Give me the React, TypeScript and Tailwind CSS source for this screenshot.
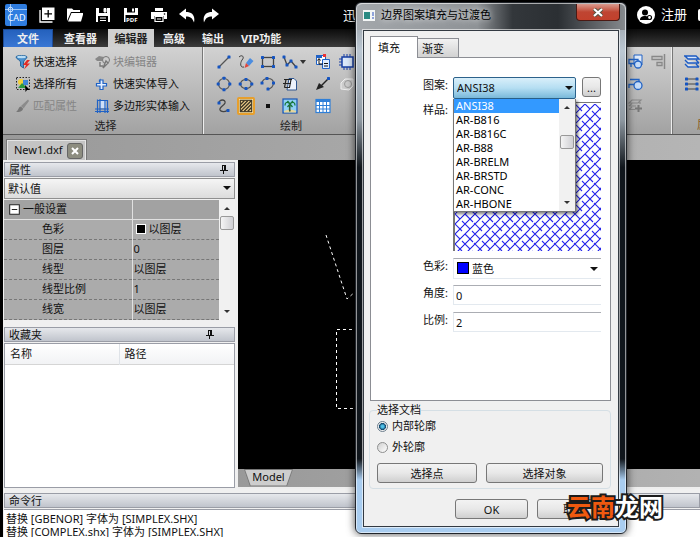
import React from 'react';

const PATTERNS = ['ANSI38', 'AR-B816', 'AR-B816C', 'AR-B88', 'AR-BRELM', 'AR-BRSTD', 'AR-CONC', 'AR-HBONE'];

const PROPERTIES = [
  { name: '色彩', value: '以图层', swatch: true },
  { name: '图层', value: '0' },
  { name: '线型', value: '以图层' },
  { name: '线型比例', value: '1' },
  { name: '线宽', value: '以图层' }
];

const MENU = ['高级', '输出', 'VIP功能'];

interface IconProps {
  children: React.ReactNode;
  className?: string;
}

function Icon({ children, className = 'size-4' }: IconProps) {
  return (
    <svg viewBox="0 0 16 16" fill="none" className={`shrink-0 ${className}`}>
      {children}
    </svg>
  );
}

function Dots({ at }: { at: number[][] }) {
  return (
    <>
      {at.map(([x, y]) => (
        <rect key={`${x}-${y}`} x={x - 1.5} y={y - 1.5} width="3" height="3" rx="0.6" fill="#1554c0" />
      ))}
    </>
  );
}

function Caret({ up = false }: { up?: boolean }) {
  return (
    <svg viewBox="0 0 8 4" className="w-2 h-1 shrink-0">
      <path d={up ? 'M0 4L4 0L8 4Z' : 'M0 0H8L4 4Z'} fill="#111" />
    </svg>
  );
}

// scroll arrows are smaller than the combo ones
function ScrollArrow({ up = false }: { up?: boolean }) {
  return (
    <svg viewBox="0 0 6 3" className="w-1.5 h-[3px] shrink-0">
      <path d={up ? 'M0 3L3 0L6 3Z' : 'M0 0H6L3 3Z'} fill="#333" />
    </svg>
  );
}

function Pin() {
  return (
    <svg viewBox="0 0 8 9" fill="none" className="w-2 h-[9px] shrink-0" shapeRendering="crispEdges">
      <path d="M2 .5H6M2.500 0V5M5.500 0V5M4.500 0V5M0 5.500H8M3.500 6V9" stroke="#111" />
    </svg>
  );
}

/* ---- Quick access bar ---- */

function QuickBar() {
  return (
    <header className="h-[29px] shrink-0 bg-black flex items-center pl-[5px] text-white">
      <svg viewBox="0 0 22 22" className="size-[22px]">
        <rect width="22" height="22" rx="2" fill="#2f7de0" />
        <path d="M0 5.5H22M5.500 0V22" stroke="#b7d8ff" strokeWidth="0.800" />
        <circle cx="5.500" cy="5.500" r="2.300" fill="none" stroke="#d9ebff" strokeWidth="0.900" />
        <text x="11.500" y="17" textAnchor="middle" fontSize="9" fill="#fff" fontFamily="Open Sans, sans-serif">CAD</text>
      </svg>
      <div className="flex items-center gap-3 pl-3">
        <button aria-label="新建">
          <Icon>
            <path d="M3 .5H15.500V13H3Z" fill="#fff" />
            <path d="M1 3V15H13.500" stroke="#fff" strokeWidth="1.300" />
            <path d="M9.200 3V10.600M5.400 6.800H13" stroke="#000" strokeWidth="1.300" />
          </Icon>
        </button>
        <button aria-label="打开">
          <Icon>
            <path d="M0 14V1.500H5L6.500 3H13V5H4L0.500 13Z" fill="#fff" />
            <path d="M4.500 6H16.500L14 14.500H1Z" fill="#fff" />
          </Icon>
        </button>
        <button aria-label="保存">
          <Icon>
            <path d="M1 1H15V15H1Z" fill="#fff" />
            <path d="M4 1H12V6H4ZM3 9H13V15H3Z" fill="#000" />
            <path d="M9 1.500H11V5H9ZM5 11H11M5 13.500H11" fill="#fff" stroke="#fff" />
          </Icon>
        </button>
        <button aria-label="另存为 PDF">
          <Icon>
            <path d="M1 1H15V8H1ZM1 8H2.500V15H1Z" fill="#fff" />
            <path d="M4 1H12V5.500H4ZM3 8H13V8.500H3Z" fill="#000" />
            <path d="M9 1.500H11V4.500H9Z" fill="#fff" />
            <text x="3" y="15" fontSize="6" fontWeight="bold" fill="#fff" fontFamily="Open Sans, sans-serif">PDF</text>
          </Icon>
        </button>
        <button aria-label="打印">
          <Icon>
            <path d="M4 1H12V4H4ZM0 5H16V12H13V9H3V12H0Z" fill="#fff" />
            <path d="M4 9.500H12V14.500H4ZM6 12H10" stroke="#fff" strokeWidth="1.200" />
            <circle cx="13.500" cy="7" r=".8" fill="#000" />
          </Icon>
        </button>
        <button aria-label="撤销">
          <Icon>
            <path d="M0 7L7 1.500V5C13 5 16.500 8.500 15 15.500C13.500 11 11 9.500 7 9.500V12.500Z" fill="#fff" />
          </Icon>
        </button>
        <button aria-label="重做" className="-ml-1">
          <Icon>
            <path d="M16 7L9 1.500V5C3 5 -.5 8.500 1 15.500C2.500 11 5 9.500 9 9.500V12.500Z" fill="#fff" />
          </Icon>
        </button>
      </div>
      <span className="pl-[124px] pt-[3px] text-[13px]">迅</span>
      <div className="ml-auto flex items-center overflow-hidden">
        <svg viewBox="0 0 18 18" className="size-[18px]">
          <circle cx="9" cy="9" r="9" fill="#fff" />
          <circle cx="8" cy="6.500" r="3" fill="#000" />
          <path d="M3 14C3 11 5 10 8 10C10 10 11 10.500 11.500 14Z" fill="#000" />
          <circle cx="12.500" cy="11.500" r="2" fill="#fff" stroke="#000" strokeWidth="1.200" />
        </svg>
        <a href="#register" className="pl-1.5 text-[13px]">注册</a>
        <span className="ml-[11px] w-[2px] h-[12px] rounded-l-full bg-white" />
      </div>
    </header>
  );
}

function MenuBar() {
  return (
    <nav className="h-[18px] shrink-0 ml-[3px] bg-linear-to-b from-[#0c0c0c] to-[#3c3c3c] flex items-stretch text-[11px] font-bold text-[#eee] leading-none">
      <button className="w-[50px] bg-linear-to-b from-[#2461bd] to-[#3a77d4] border border-[#1d4c99] border-b-0">文件</button>
      <button className="w-[55px]">查看器</button>
      <button className="w-[46px] bg-[#d0d0d0] text-[#222]">编辑器</button>
      <div className="flex gap-[17px] pl-[9px]">
        {MENU.map((item) => (
          <button key={item}>{item}</button>
        ))}
      </div>
    </nav>
  );
}

/* ---- Ribbon ---- */

interface ToolProps {
  label: string;
  disabled?: boolean;
  children: React.ReactNode;
}

function Tool({ label, disabled, children }: ToolProps) {
  return (
    <button disabled={disabled} className="flex items-center gap-[2px] text-[#111] disabled:text-[#858585]">
      {children}
      <span className="whitespace-nowrap leading-4">{label}</span>
    </button>
  );
}

function SelectGroup() {
  return (
    <section className="w-[200px] shrink-0 border-r border-[#777] flex flex-col pt-[7px]">
      <div className="flex gap-[18px] pl-[12px]">
        <div className="flex flex-col gap-[6px]">
          <Tool label="快速选择">
            <Icon>
              <path d="M1 3C1 1 12 1 12 3C12 5 8.500 6 8.500 8V14L5.500 12V8C5.500 6 1 5 1 3Z" fill="#4a91cf" stroke="#26659d" />
              <ellipse cx="6.500" cy="3" rx="4.500" ry="1.200" fill="#b9dcf3" />
              <path d="M12 6L8 11H11L9 15.500L15 9.500H12L15 6Z" fill="#e32b25" />
            </Icon>
          </Tool>
          <Tool label="选择所有">
            <Icon>
              <rect x="1.500" y="1.500" width="13" height="12" stroke="#222" strokeDasharray="1.500 1.500" />
              <circle cx="6" cy="6" r="3" fill="#f4d13a" />
              <rect x="8" y="4" width="5" height="5" fill="#3e87d8" />
              <path d="M3 12L7 7L12 12Z" fill="#2b9b3e" />
              <path d="M10 9L15 14L12 14L10.500 16Z" fill="#000" />
            </Icon>
          </Tool>
          <Tool label="匹配属性" disabled>
            <Icon>
              <path d="M13 1.500L6 8L8.500 10.500L14 3Z" fill="#8b8b8b" />
              <path d="M6 8.500C3 9 4 12 1 14C5 14.500 8 13 8 10.500Z" fill="#777" />
            </Icon>
          </Tool>
        </div>
        <div className="flex flex-col gap-[6px]">
          <Tool label="块编辑器" disabled>
            <Icon>
              <path d="M0 5L4 2L9 3L7 7L2 7Z" fill="#888" />
              <circle cx="11" cy="6" r="3.500" fill="#ccc" stroke="#777" />
              <path d="M8 14L11 7L13 9ZM5 8V12H8" stroke="#777" strokeWidth="1.400" fill="#ddd" />
            </Icon>
          </Tool>
          <Tool label="快速实体导入">
            <Icon>
              <path d="M4.500 4.500V4H8V7.500H11.500V10H8V13.500H5V10H1.500V7.500H5V4Z" fill="#e5f0ff" stroke="#1f62c6" strokeWidth="1.200" />
            </Icon>
          </Tool>
          <Tool label="多边形实体输入">
            <Icon>
              <path d="M5 3H11V10H5Z" fill="#cfe0f8" />
              <path d="M2.500 1.500V15M5 1V15M-.5 11H14M-.5 13.500H14M3 2.500H12.500V15M10 3V15" stroke="#1f62c6" strokeWidth="1.200" />
            </Icon>
          </Tool>
        </div>
      </div>
      <h2 className="text-center leading-4 pl-[6px] pt-1 text-[#222]">选择</h2>
    </section>
  );
}

function DrawGroup() {
  return (
    <section className="w-[172px] shrink-0 border-l border-[#eee] flex flex-col pt-[7px]">
      <div className="grid grid-cols-[22px_22px_22px_33px_24px_16px] gap-y-[6px] pl-[12px]">
        <button aria-label="直线"><Icon><path d="M3 13L13 3" stroke="#555" strokeWidth="1.300" /><Dots at={[[3, 13], [13, 3]]} /></Icon></button>
        <button aria-label="手绘">
          <Icon>
            <path d="M1 3C4 0 7 3 4 6C2 9 2 14 6 13" stroke="#444" />
            <path d="M12 4L15.500 7L11 12L8 9Z" fill="#4b8de0" />
            <path d="M8 9L11 12L6.500 14Z" fill="#e0443b" />
          </Icon>
        </button>
        <button aria-label="矩形"><Icon><rect x="2.500" y="3.500" width="11" height="9" stroke="#444" strokeWidth="1.300" /><Dots at={[[2.5, 3.5], [13.5, 3.5], [2.5, 12.5], [13.5, 12.5]]} /></Icon></button>
        <button aria-label="多段线" className="flex items-center gap-[2px]">
          <Icon><path d="M2 3L5 11L9 7L14 13" stroke="#444" strokeWidth="1.300" /><Dots at={[[2, 3], [5, 11], [9, 7], [14, 13]]} /></Icon>
          <svg viewBox="0 0 6 4" className="w-1.5 h-1"><path d="M0 0H6L3 4Z" fill="#333" /></svg>
        </button>
        <button aria-label="复制块">
          <Icon>
            <path d="M1.500 1.500H10.500V10.500H1.500Z" fill="#fff" stroke="#1f62c6" />
            <path d="M1 1H7V4H1Z" fill="#1f62c6" /><path d="M8 0H11V3H8Z" fill="#e33" />
            <path d="M7.500 5.500H14.500V14.500H7.500Z" fill="#dfeeff" stroke="#1f62c6" />
            <path d="M4 5V10H8M2.500 6.500L4 4.500L5.500 6.500M9 12H13M9 9.500H13" stroke="#111" />
          </Icon>
        </button>
        <button aria-label="块">
          <Icon><rect x="3" y="3" width="11" height="10" fill="#dbe8fa" stroke="#173fa5" strokeWidth="1.500" /><path d="M5 0V3M8 0V3M11 0V3M0 5H3M0 8H3M0 11H3M5 13V16M8 13V16M11 13V16" stroke="#173fa5" /></Icon>
        </button>

        <button aria-label="圆"><Icon><circle cx="8" cy="8" r="5.500" stroke="#555" strokeWidth="1.200" /><Dots at={[[8, 2.2], [8, 13.8], [2.2, 8], [13.8, 8]]} /></Icon></button>
        <button aria-label="椭圆"><Icon><ellipse cx="8" cy="8" rx="5.500" ry="4.500" stroke="#555" strokeWidth="1.200" /><Dots at={[[8, 3.5], [8, 12.5], [2.2, 8], [13.8, 8]]} /></Icon></button>
        <button aria-label="圆弧"><Icon><path d="M2 7C3 1 13 1 13.500 7C13.500 10 11 13 8 13" stroke="#555" strokeWidth="1.200" /><Dots at={[[2, 7], [7, 2.5], [13.5, 7], [8, 13]]} /></Icon></button>
        <button aria-label="文字">
          <Icon>
            <path d="M7 2.500H12L14.500 5V14H5Z" fill="#eef3fc" stroke="#30568f" />
            <path d="M2 3.500H10M4 3.500L2.500 11.500M9 3.500L7.500 11.500M1 7.500H9M2.500 11.500H8" stroke="#222" strokeWidth="1.200" />
          </Icon>
        </button>
        <button aria-label="箭头"><Icon><path d="M14 2L6 10" stroke="#222" strokeWidth="1.500" /><path d="M1 14L4 7L9 11Z" fill="#222" /><Dots at={[[13.5, 2.5]]} /></Icon></button>
        <button aria-label="云线"><Icon><path d="M2 13V7L6 3H14V10L10 14Z" fill="#ccc" stroke="#eee" /><circle cx="9" cy="8" r="3.500" stroke="#999" /></Icon></button>

        <button aria-label="样条"><Icon><path d="M3 5C3 1 10 1 9 5C8 8 3 9 4 12C5 14 9 14 11 12.500" stroke="#444" strokeWidth="1.300" /><Dots at={[[3, 5], [12, 12.5]]} /></Icon></button>
        <button aria-label="填充" className="size-[18px] -m-px bg-[#ffe7a8] border-2 border-[#e79f2c] rounded-xs flex items-center justify-center">
          <Icon className="size-3.5">
            <rect x="1.500" y="1.500" width="13" height="13" fill="#f3d28a" stroke="#3a3325" strokeWidth="1.300" />
            <path d="M2 6L6 2M2 10L10 2M2 14L14 2M6 14L14 6M10 14L14 10" stroke="#3a3325" strokeWidth="1.600" />
          </Icon>
        </button>
        <button aria-label="点"><Icon><rect x="6" y="6" width="4" height="4" fill="#111" /></Icon></button>
        <button aria-label="图像">
          <Icon>
            <rect x="1" y="1" width="14" height="14" fill="#8fd0f5" stroke="#1a55b3" strokeWidth="1.200" />
            <path d="M2 13C6 11 10 11 14 13V14.500H2Z" fill="#e8d59b" />
            <path d="M8 13.500C7 11 8 9 8 6" stroke="#2f5c34" strokeWidth="1.600" />
            <path d="M8 6C5 3 3 4.500 3 7.500M8 6C11 3 13 4.500 13 7.500M8 6L5.500 3M8 6L11 3M8 6L5.500 9M8 6L10.500 9" stroke="#17783c" strokeWidth="1.300" />
          </Icon>
        </button>
        <button aria-label="表格"><Icon><rect x="1" y="1.500" width="14" height="13" fill="#fff" stroke="#2f7fd8" strokeWidth="1.200" /><path d="M1 2H15V4H1Z" fill="#2f7fd8" /><path d="M4.500 4V14M8 4V14M11.500 4V14M1 7.500H15M1 11H15" stroke="#2f7fd8" /></Icon></button>
      </div>
      <h2 className="text-center leading-4 pl-[3px] pt-1 text-[#222]">绘制</h2>
    </section>
  );
}

function ToolsGroup() {
  return (
    <section className="flex-1 min-w-0 border-r border-[#eee] flex justify-end pt-[7px] pr-[5px]">
      <div className="grid grid-cols-[16px_16px] auto-rows-[16px] gap-x-[6px] gap-y-[6px]">
        <Icon><path d="M6 1H14V11H6Z" fill="#dfeafa" stroke="#2263c4" /><path d="M1 5.500H10V9.500H1ZM3 9.500V13" stroke="#2263c4" strokeWidth="1.300" /><circle cx="10" cy="10.500" r="3.500" fill="#c6dcf8" stroke="#2263c4" strokeWidth="1.300" /></Icon>
        <Icon><path d="M2 2.500H12V5.500H2ZM7 8.500H12V11.500H7Z" stroke="#888" strokeWidth="1.300" /><path d="M14.500 0V15" stroke="#888" strokeWidth="1.500" /></Icon>
        <Icon><path d="M2 3.500H11V8.500H1V12" stroke="#2263c4" strokeWidth="1.300" /><circle cx="10" cy="9.500" r="4" fill="#c6dcf8" stroke="#2263c4" strokeWidth="1.300" /></Icon>
        <span />
        <Icon><path d="M4 2H13L10 5H1ZM1 8L4 5.500M1 8H8M1 11.500L4 9M1 11.500H7M12 2V6" stroke="#888" strokeWidth="1.200" /><path d="M10.500 7V14M7 10.500H14" stroke="#777" strokeWidth="2" /></Icon>
      </div>
    </section>
  );
}

function LayerGroup() {
  return (
    <section className="w-[28px] shrink-0 overflow-hidden flex flex-col pt-[7px] pl-[11px] border-l border-[#777]">
      <div className="flex flex-col gap-[6px]">
        <Icon><path d="M1 2H12L15 5H4ZM1 6L4 9H15M1 10L4 13H15M1 2V3M12 6L15 9M12 10L15 13" fill="#d8e6fa" stroke="#1b5ac2" strokeWidth="1.400" /></Icon>
        <Icon><path d="M3 3H13M3 8H13M3 13H13" stroke="#444" /><Dots at={[[2.5, 3], [13, 3], [2.5, 8], [13, 8], [2.5, 13], [13, 13]]} /></Icon>
      </div>
      <h2 className="mt-auto pb-[1px] pl-[13px] whitespace-nowrap leading-4 text-[#8a5a20]">属性</h2>
    </section>
  );
}

function Ribbon() {
  return (
    <div className="h-[88px] shrink-0 ml-[3px] bg-linear-to-b from-[#d2d2d2] to-[#a2a2a2] border-b border-[#555] flex">
      <SelectGroup />
      <DrawGroup />
      <ToolsGroup />
      <LayerGroup />
    </div>
  );
}

/* ---- Left side panels ---- */

function PanelTitle({ title, pinClass }: { title: string; pinClass: string }) {
  return (
    <div className={`h-[15px] shrink-0 bg-linear-to-b from-[#e6e8ec] to-[#c0c4cc] border border-[#9a9da6] flex items-center justify-between pl-1 ${pinClass}`}>
      <h2 className="leading-none">{title}</h2>
      <Pin />
    </div>
  );
}

function ScrollBar({ thumbClass }: { thumbClass: string }) {
  return (
    <div className="w-[16px] shrink-0 bg-[#f1f1f1] flex flex-col items-center py-[7px]">
      <ScrollArrow up />
      <span className={`w-[14px] h-[14px] rounded-xs border border-[#999] bg-linear-to-r from-[#f5f5f5] to-[#cfcfd3] ${thumbClass}`} />
      <span className="mt-auto flex"><ScrollArrow /></span>
    </div>
  );
}

function SidePanels() {
  return (
    <aside className="w-[235px] shrink-0 bg-[#f0f0f0] flex flex-col pt-[2px] pl-px pr-[3px] pb-px">
      <PanelTitle title="属性" pinClass="pr-[6px]" />
      <div className="relative mt-px shrink-0">
        <select aria-label="对象" className="block w-full h-[21px] appearance-none border border-[#8f8f8f] bg-linear-to-b from-[#f5f5f5] to-[#dcdcdc] pl-[3px] leading-4">
          <option>默认值</option>
        </select>
        <span className="absolute right-1 top-2 flex pointer-events-none"><Caret /></span>
      </div>
      <div className="flex shrink-0 mt-px">
        <table className="flex-1 bg-[#ababab] border-collapse">
          <thead>
            <tr className="h-[19px] bg-[#a2a2a2] border-b border-[#e0e0e0]">
              <th className="w-[128px] border-r border-[#e0e0e0] text-left font-normal p-0 pl-[5px]">
                <span className="flex items-center gap-[3px] leading-4">
                  <Icon className="size-[11px]"><path d="M1 1H15V15H1Z" fill="#fff" stroke="#222" strokeWidth="1.500" /><path d="M4 8H12" stroke="#222" strokeWidth="1.500" /></Icon>
                  一般设置
                </span>
              </th>
              <th className="p-0" />
            </tr>
          </thead>
          <tbody>
            {PROPERTIES.map((item) => (
              <tr key={item.name} className="h-[20px] border-b border-dashed border-[#777]">
                <td className="p-0 pl-[38px] border-r border-solid border-r-[#e0e0e0] leading-4">{item.name}</td>
                <td className="p-0 pl-[1px] leading-4">
                  <span className="flex items-center gap-[3px]">
                    {item.swatch && <span className="ml-[2px] size-[10px] bg-black border border-white" />}
                    {item.value}
                  </span>
                </td>
              </tr>
            ))}
          </tbody>
        </table>
        <ScrollBar thumbClass="mt-[6px]" />
      </div>
      <div className="mt-[7px] flex flex-col flex-1">
        <PanelTitle title="收藏夹" pinClass="pr-[20px]" />
        <div className="mt-px flex-1 bg-white border border-[#9a9da6]">
          <table className="w-full border-collapse bg-linear-to-b from-white to-[#f1f2f4]">
            <thead>
              <tr className="h-[21px] border-b border-[#d5d5d5]">
                <th className="w-[114px] p-0 pl-[5px] text-left font-normal border-r border-[#dfe3e8]">名称</th>
                <th className="p-0 pl-[5px] text-left font-normal">路径</th>
              </tr>
            </thead>
          </table>
        </div>
      </div>
    </aside>
  );
}

function DrawingArea() {
  return (
    <div className="flex-1 min-w-0 bg-black flex flex-col">
      <svg className="flex-1 w-full min-h-0" fill="none" stroke="#fff" strokeDasharray="3 3">
        <path d="M88 75L109 139L118 131" />
        <path d="M180 169.500H98.500V248.500H180" />
      </svg>
      <div className="h-[20px] shrink-0 bg-linear-to-r from-[#999] to-[#b2b2b2] border-b-2 border-[#eee] pl-[6px] flex">
        <button className="w-[49px] h-[17px] bg-[#777] [clip-path:polygon(0_0,100%_0,88%_100%,12%_100%)]">
          <span className="block h-4 mx-px bg-[#cdcdcd] leading-[14px] [clip-path:polygon(0_0,100%_0,88%_100%,12%_100%)]">Model</span>
        </button>
      </div>
    </div>
  );
}

/* ---- Hatch dialog ---- */

function HatchPreview() {
  return (
    <svg className="block w-full h-full">
      <defs>
        <pattern id="ansi38" width="20" height="20" patternUnits="userSpaceOnUse">
          <path d="M-1 11L11 -1M-1 21L21 -1M9 21L21 9" stroke="#1a1ae6" strokeWidth="1.100" />
          <path d="M-1 -1L7 7M10 10L18 18M19 19L21 21M9 -1L15 5M17 7L21 11M-1 9L5 15M7 17L11 21" stroke="#2a2aee" strokeWidth="1.100" />
        </pattern>
      </defs>
      <rect width="100%" height="100%" fill="url(#ansi38)" />
    </svg>
  );
}

const label = 'w-[75px] text-right leading-4 pr-[5px] shrink-0';
const field = 'flex-1 min-w-0 h-[20px] pl-[2px] border border-r-0 border-[#e3e9ef] border-t-[#abadb3]';
const button = 'border border-[#777] rounded-[3px] bg-linear-to-b from-[#f3f3f3] via-[#e8e8e8] to-[#cfcfcf] leading-none';

function HatchDialog() {
  return (
    <div role="dialog" aria-label="边界图案填充与过渡色" className="absolute left-[355px] top-[2px] w-[272px] px-[7px] pb-[6px] rounded-md border border-[#20242a] bg-linear-to-b from-[#8b9096] via-[#10161c] via-31% to-[#a9cdf0] shadow-[0_0_8px_rgba(0,0,0,0.7)] inset-shadow-[0_0_0_1px_rgba(255,255,255,0.55)] bg-[linear-gradient(to_bottom,#8b9096_0%,#bcc8d3_9%,#8f99a2_22%,#10161c_31%,#10161c_86%,#a9cdf0_90%)]">
      <div className="h-[27px] -mx-[6px] pl-[6px] pr-[5px] rounded-t-md bg-[linear-gradient(to_right,#a3a7ab_0%,#8e9296_45%,#33373b_58%,#2b2f33_75%,#85898d_100%)] border-t border-white/60 flex items-start">
        <svg viewBox="0 0 12 11" className="w-3 h-[11px] mt-[6px]">
          <rect width="12" height="11" fill="#f4f6f6" />
          <rect x="1" y="2" width="6" height="7" fill="#2b8a83" />
          <path d="M10 2V6M10 7V9" stroke="#2c50c0" />
        </svg>
        <h1 className="pl-[6px] pt-[3px] text-[11px] leading-4 text-black [text-shadow:0_0_6px_#fff]">边界图案填充与过渡色</h1>
        <button aria-label="关闭" className="ml-auto w-[44px] h-[17px] rounded-b-sm border border-t-0 border-[#4b1a14] bg-linear-to-b from-[#d99a8e] via-[#bf4532] to-[#c2412c] flex items-center justify-center">
          <svg viewBox="0 0 10 9" className="w-2.5 h-[9px]">
            <path d="M1 1L9 8M9 1L1 8" stroke="#554" strokeWidth="4" />
            <path d="M1 1L9 8M9 1L1 8" stroke="#fff" strokeWidth="2.200" />
          </svg>
        </button>
      </div>

      <div className="bg-[#f0f0f0] border border-[#333a42] outline outline-white/60 pl-[5px] pr-[7px] pt-[5px] pb-[7px]">
        {/* Tabs */}
        <div role="tablist" className="flex items-end pl-px h-[21px]">
          <button role="tab" aria-selected="true" className="relative w-[48px] h-[22px] -mb-px bg-white border border-b-0 border-[#8c8e94] leading-none pr-[10px]">填充</button>
          <button role="tab" aria-selected="false" className="w-[41px] h-[19px] border border-l-0 border-b-0 border-[#8c8e94] bg-linear-to-b from-[#f2f2f2] to-[#d2d2d2] leading-none pr-2.5">渐变</button>
        </div>

        <div role="tabpanel" className="ml-px h-[344px] bg-white border border-[#8c8e94] pl-[7px] pr-[9px] pt-[19px]">
          <div className="flex items-start">
            <label htmlFor="pattern" className={label}>图案:</label>
            <div className="relative flex-1">
              <select id="pattern" className="block w-full h-[22px] appearance-none pl-[3px] rounded-xs border border-[#2c628b] bg-linear-to-b from-[#d9effa] via-[#b5def2] to-[#79b9da] leading-4">
                <option>ANSI38</option>
              </select>
              <span className="absolute right-[3px] top-[9px] flex pointer-events-none"><Caret /></span>
              <div className="absolute z-10 top-[22px] inset-x-0 bg-white border border-t-0 border-[#777] shadow-[2px_2px_3px_rgba(0,0,0,0.5)] flex">
                <ul role="listbox" aria-label="图案" className="flex-1">
                  {PATTERNS.map((name, i) => (
                    <li
                      key={name}
                      role="option"
                      aria-selected={i === 0}
                      className={`pl-[2px] h-[14px] leading-[14px] ${i === 0 ? 'bg-[#3399ff] text-white' : 'text-black'}`}
                    >
                      {name}
                    </li>
                  ))}
                </ul>
                <ScrollBar thumbClass="mt-[26px]" />
              </div>
            </div>
            <button aria-label="浏览" className={`${button} h-[20px] w-[19px] ml-[6px]`}>...</button>
          </div>

          <div className="flex items-start mt-[3px]">
            <span className={label}>样品:</span>
            <div className="flex-1 h-[149px] border-t border-l-2 border-[#777] pt-px">
              <HatchPreview />
            </div>
          </div>

          <div className="flex items-start mt-[7px]">
            <label htmlFor="color" className={label}>色彩:</label>
            <div className="relative flex-1">
              <select id="color" className="block w-full h-[21px] appearance-none pl-[18px] bg-white border border-r-0 border-[#e3e9ef] border-t-[#abadb3] leading-4">
                <option>蓝色</option>
              </select>
              <span className="absolute left-[4px] top-[4px] size-[12px] bg-[#0000ff] border border-black pointer-events-none" />
              <span className="absolute right-[3px] top-[9px] flex pointer-events-none"><Caret /></span>
            </div>
          </div>
          <div className="flex items-start mt-[6px]">
            <label htmlFor="angle" className={label}>角度:</label>
            <input id="angle" defaultValue="0" className={field} />
          </div>
          <div className="flex items-start mt-[7px]">
            <label htmlFor="scale" className={label}>比例:</label>
            <input id="scale" defaultValue="2" className={field} />
          </div>
        </div>

        {/* Boundary source */}
        <fieldset className="mt-[1px] min-w-0 border border-[#d5dfe5] rounded-sm px-[7px] pb-[5px]">
          <legend className="leading-4">选择文档</legend>
          <label className="flex items-center gap-1 h-4 leading-4">
            <input type="radio" name="doc" defaultChecked className="appearance-none size-[11px] rounded-full border border-[#6b7d8c] bg-white checked:bg-radial checked:from-[#4fc0e8] checked:from-20% checked:via-[#12486d] checked:via-50% checked:to-[#f0f0f0] checked:to-60%" />
            内部轮廓
          </label>
          <label className="flex items-center gap-1 h-4 leading-4 mt-[5px]">
            <input type="radio" name="doc" className="appearance-none size-[11px] rounded-full border border-[#8e8f8f] bg-linear-to-br from-[#d0d0d0] to-white" />
            外轮廓
          </label>
          <div className="flex gap-[9px] mt-[8px]">
            <button className={`${button} h-[20px] w-[100px]`}>选择点</button>
            <button className={`${button} h-[20px] flex-1`}>选择对象</button>
          </div>
        </fieldset>

        <div className="flex justify-end gap-[9px] mt-[10px]">
          <button className={`${button} h-[20px] w-[73px]`}>OK</button>
          <button className={`${button} h-[20px] w-[74px]`}>取消</button>
        </div>
      </div>
    </div>
  );
}

export default function App() {
  return (
    <div className="relative min-h-screen overflow-hidden bg-black flex flex-col text-[11px] text-[#111] [font-family:'Noto_Sans','Noto_Sans_CJK_SC',sans-serif]">
      <QuickBar />
      <MenuBar />
      <Ribbon />

      {/* Document tabs */}
      <div className="h-[25px] shrink-0 ml-[3px] bg-linear-to-r from-[#999] to-[#b5b5b5] flex items-end pl-1">
        <div className="h-[20px] w-[79px] bg-[#c4c4c4] border border-b-0 border-[#e5e5e5] outline outline-[#777] flex items-center justify-between pl-[6px] pr-[2px]">
          New1.dxf
          <button aria-label="关闭 New1.dxf" className="size-4 rounded-[3px] bg-[#8d8d80] border border-[#666] flex items-center justify-center">
            <svg viewBox="0 0 8 8" className="size-2"><path d="M1 1L7 7M7 1L1 7" stroke="#fff" strokeWidth="2" /></svg>
          </button>
        </div>
      </div>

      <main className="flex-1 ml-[3px] flex">
        <SidePanels />
        <DrawingArea />
      </main>

      {/* Command line */}
      <footer className="h-[48px] shrink-0 ml-[3px] bg-[#f0f0f0] pt-[4px] pl-px overflow-hidden">
        <h2 className="h-[15px] pl-1 border border-[#9a9da6] bg-linear-to-b from-[#e6e8ec] to-[#c0c4cc] leading-[13px]">命令行</h2>
        <div className="mt-px border-t border-[#9a9da6] bg-white pl-[2px] pt-[2px]">
          <p className="leading-[13px]">替换 [GBENOR] 字体为 [SIMPLEX.SHX]</p>
          <p className="leading-[13px]">替换 [COMPLEX.shx] 字体为 [SIMPLEX.SHX]</p>
        </div>
      </footer>

      <HatchDialog />

      <div className="absolute left-[567px] top-[491px] text-2xl font-bold text-white [-webkit-text-stroke:4px_#1c1c1c] [paint-order:stroke_fill] pointer-events-none">
        <span className="text-[#f0590f]">云南</span>龙网
      </div>
    </div>
  );
}
